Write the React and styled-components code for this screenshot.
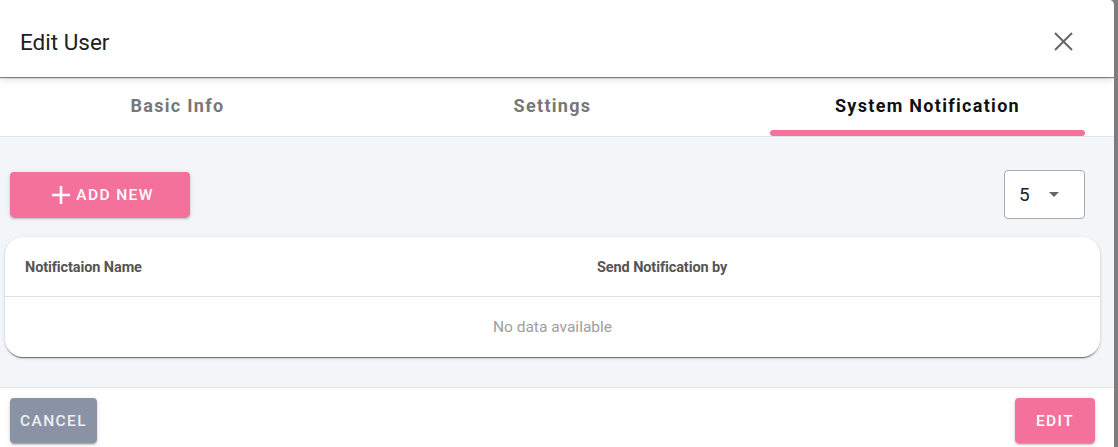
import React, { useState } from "react"
import styled, { createGlobalStyle } from "styled-components"

const GlobalStyle = createGlobalStyle`
  html, body {
    margin: 0;
    padding: 0;
    background: #7d7d7d;
    font-family: Roboto, "Liberation Sans", sans-serif;
    overflow: hidden;
  }
`

const pink = "#f4719c"

const Dialog = styled.div`
  width: 1114px;
  height: 447px;
  background: #fff;
  border-top-right-radius: 5px;
  overflow: hidden;
  display: flex;
  flex-direction: column;
`

const Header = styled.header`
  position: relative;
  z-index: 2;
  height: 77px;
  box-sizing: border-box;
  flex: none;
  display: flex;
  align-items: center;
  justify-content: space-between;
  padding: 6px 41px 0 20px;
  background: #fff;
  box-shadow: 0 1px 1px rgba(0, 0, 0, 0.45), 0 3px 6px rgba(0, 0, 0, 0.12);
`

const Title = styled.h1`
  margin: 0;
  font-size: 22.5px;
  font-weight: 400;
  color: #212121;
`

const CloseButton = styled.button`
  border: 0;
  background: none;
  padding: 0;
  display: flex;
  cursor: pointer;
`

const TabBar = styled.nav`
  flex: none;
  height: 59px;
  display: flex;
  margin-left: -10px;
  border-bottom: 1px solid #e2e4e8;
`

const Tab = styled.button`
  position: relative;
  width: 375px;
  flex: none;
  border: 0;
  background: none;
  font-family: inherit;
  font-size: 18px;
  font-weight: 700;
  letter-spacing: 1.3px;
  color: ${props => (props.active ? "#111" : "#777")};
  padding: 0 0 2px;
  cursor: pointer;

  &::after {
    content: "";
    display: ${props => (props.active ? "block" : "none")};
    position: absolute;
    left: 30px;
    right: 30px;
    bottom: 0;
    height: 6px;
    border-radius: 3px;
    background: ${pink};
  }
`

const Content = styled.section`
  flex: none;
  height: 251px;
  box-sizing: border-box;
  background: #f3f6f9;
  border-bottom: 1px solid #e2e4e8;
  padding: 33px 14px 30px 5px;
  display: flex;
  flex-direction: column;
  gap: 18px;
`

const Toolbar = styled.div`
  display: flex;
  align-items: center;
  justify-content: space-between;
  padding: 0 15px 0 5px;
`

const Button = styled.button`
  height: 45px;
  border: 0;
  border-radius: 4px;
  padding: 0 ${props => props.pad || 20}px;
  background: ${props => props.bg || pink};
  color: ${props => props.fg || "#fff"};
  font-family: inherit;
  font-size: 15.5px;
  font-weight: 500;
  letter-spacing: 1.4px;
  display: flex;
  align-items: center;
  gap: 6px;
  box-shadow: 0 3px 1px -2px rgba(0, 0, 0, 0.2), 0 2px 2px rgba(0, 0, 0, 0.14),
    0 1px 5px rgba(0, 0, 0, 0.12);
  cursor: pointer;
`

const AddButton = styled(Button)`
  width: 180px;
  justify-content: center;
  padding-right: 14px;
`

const Select = styled.div`
  width: 81px;
  height: 49px;
  box-sizing: border-box;
  border: 1px solid #a9a9a9;
  border-radius: 4px;
  background: #fff;
  display: flex;
  align-items: center;
  padding: 0 25px 0 14px;
  justify-content: space-between;
  font-size: 19px;
  color: #222;
`

const Caret = styled.span`
  width: 0;
  height: 0;
  border-left: 5.5px solid transparent;
  border-right: 5.5px solid transparent;
  border-top: 5.5px solid #666;
`

const Card = styled.div`
  background: #fff;
  border-radius: 18px;
  box-shadow: 0 2px 1px -1px rgba(0, 0, 0, 0.5), 0 1px 3px rgba(0, 0, 0, 0.22);
  overflow: hidden;
`

const HeadRow = styled.div`
  display: grid;
  grid-template-columns: 572px 1fr;
  height: 59px;
  align-items: center;
  border-bottom: 1px solid #e0e0e0;
`

const HeadCell = styled.div`
  padding-left: 20px;
  padding-top: 2px;
  font-size: 14.5px;
  font-weight: 700;
  color: #555;
  letter-spacing: -0.1px;
`

const EmptyRow = styled.div`
  height: 60px;
  display: flex;
  align-items: center;
  justify-content: center;
  font-size: 15.5px;
  color: #9e9e9e;
`

const Footer = styled.footer`
  flex: 1;
  display: flex;
  justify-content: space-between;
  align-items: flex-start;
  padding: 10px 19px 0 10px;
`

const CloseIcon = () => (
  <svg width="19" height="19" viewBox="0 0 19 19">
    <path d="M1 1 L18 18 M18 1 L1 18" stroke="#666" strokeWidth="2" />
  </svg>
)

const PlusIcon = () => (
  <svg width="18" height="18" viewBox="0 0 18 18">
    <path d="M9 0 V18 M0 9 H18" stroke="#fff" strokeWidth="2.6" />
  </svg>
)

const tabs = ["Basic Info", "Settings", "System Notification"]

export default function App() {
  const [tab, setTab] = useState(2)

  return (
    <>
      <GlobalStyle />
      <Dialog>
        <Header>
          <Title>Edit User</Title>
          <CloseButton aria-label="close">
            <CloseIcon />
          </CloseButton>
        </Header>
        <TabBar>
          {tabs.map((t, i) => (
            <Tab key={t} active={i === tab} onClick={() => setTab(i)}>
              {t}
            </Tab>
          ))}
        </TabBar>
        <Content>
          <Toolbar>
            <AddButton>
              <PlusIcon />
              ADD NEW
            </AddButton>
            <Select>
              5
              <Caret />
            </Select>
          </Toolbar>
          <Card>
            <HeadRow>
              <HeadCell>Notifictaion Name</HeadCell>
              <HeadCell>Send Notification by</HeadCell>
            </HeadRow>
            <EmptyRow>No data available</EmptyRow>
          </Card>
        </Content>
        <Footer>
          <Button bg="#8a93a5" fg="#eef0f3" pad={10}>
            CANCEL
          </Button>
          <Button pad={21}>EDIT</Button>
        </Footer>
      </Dialog>
    </>
  )
}
